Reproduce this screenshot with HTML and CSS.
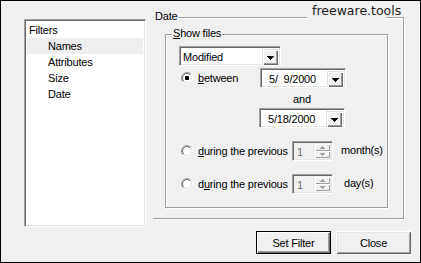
FILE: index.html
```html
<!DOCTYPE html>
<html>
<head>
<meta charset="utf-8">
<link rel="stylesheet" href="styles.css">
</head>
<body>
<div class="window">
  <div class="watermark">freeware.tools</div>
  <div class="main">
    <ul class="listbox sunken">
      <li class="root">Filters</li>
      <li class="child selected">Names</li>
      <li class="child">Attributes</li>
      <li class="child">Size</li>
      <li class="child">Date</li>
    </ul>
    <div class="group date-group">
      <div class="legend date-legend">Date</div>
      <div class="group show-group">
        <div class="legend show-legend"><u>S</u>how files</div>
        <div class="combo sunken">
          <span class="field-text">Modified</span>
          <span class="dropbtn"><svg width="7" height="4" viewBox="0 0 7 4"><path d="M0 0h7v1h-1v1h-1v1h-1v1h-1v-1h-1v-1h-1v-1h-1z" fill="#000"/></svg></span>
        </div>
        <div class="opt-row first-row">
          <svg class="radio" width="12" height="12" viewBox="0 0 12 12"><circle cx="6" cy="6" r="5" fill="#fff"/><path d="M2.1 9.9A5.5 5.5 0 0 1 9.9 2.1" stroke="#a0a0a0" fill="none"/><path d="M2.8 9.2A4.5 4.5 0 0 1 9.2 2.8" stroke="#696969" fill="none"/><path d="M9.9 2.1A5.5 5.5 0 0 1 2.1 9.9" stroke="#fff" fill="none"/><path d="M9.2 2.8A4.5 4.5 0 0 1 2.8 9.2" stroke="#e3e3e3" fill="none"/><rect x="4" y="4" width="4" height="4" rx="1" fill="#000"/></svg>
          <span class="opt-label between-label"><u>b</u>etween</span>
          <div class="datepick sunken">
            <span class="field-text date-text">5/&nbsp;&nbsp;9/2000</span>
            <span class="dropbtn"><svg width="7" height="4" viewBox="0 0 7 4"><path d="M0 0h7v1h-1v1h-1v1h-1v1h-1v-1h-1v-1h-1v-1h-1z" fill="#000"/></svg></span>
          </div>
        </div>
        <div class="and">and</div>
        <div class="datepick sunken second-date">
          <span class="field-text date-text">5/18/2000</span>
          <span class="dropbtn"><svg width="7" height="4" viewBox="0 0 7 4"><path d="M0 0h7v1h-1v1h-1v1h-1v1h-1v-1h-1v-1h-1v-1h-1z" fill="#000"/></svg></span>
        </div>
        <div class="opt-row period-row">
          <svg class="radio" width="12" height="12" viewBox="0 0 12 12"><circle cx="6" cy="6" r="5" fill="#fff"/><path d="M2.1 9.9A5.5 5.5 0 0 1 9.9 2.1" stroke="#a0a0a0" fill="none"/><path d="M2.8 9.2A4.5 4.5 0 0 1 9.2 2.8" stroke="#696969" fill="none"/><path d="M9.9 2.1A5.5 5.5 0 0 1 2.1 9.9" stroke="#fff" fill="none"/><path d="M9.2 2.8A4.5 4.5 0 0 1 2.8 9.2" stroke="#e3e3e3" fill="none"/></svg>
          <span class="opt-label period-label"><u>d</u>uring the previous</span>
          <div class="spin sunken">
            <span class="spin-text">1</span>
            <span class="spin-btns">
              <span class="spin-btn"><svg width="5" height="3" viewBox="0 0 5 3"><path d="M2 0h1v1h1v1h1v1h-5v-1h1v-1h1z" fill="#a0a0a0"/></svg></span>
              <span class="spin-btn"><svg width="5" height="3" viewBox="0 0 5 3"><path d="M0 0h5v1h-1v1h-1v1h-1v-1h-1v-1h-1z" fill="#a0a0a0"/></svg></span>
            </span>
          </div>
          <span class="unit">month(s)</span>
        </div>
        <div class="opt-row period-row">
          <svg class="radio" width="12" height="12" viewBox="0 0 12 12"><circle cx="6" cy="6" r="5" fill="#fff"/><path d="M2.1 9.9A5.5 5.5 0 0 1 9.9 2.1" stroke="#a0a0a0" fill="none"/><path d="M2.8 9.2A4.5 4.5 0 0 1 9.2 2.8" stroke="#696969" fill="none"/><path d="M9.9 2.1A5.5 5.5 0 0 1 2.1 9.9" stroke="#fff" fill="none"/><path d="M9.2 2.8A4.5 4.5 0 0 1 2.8 9.2" stroke="#e3e3e3" fill="none"/></svg>
          <span class="opt-label period-label">d<u>u</u>ring the previous</span>
          <div class="spin sunken">
            <span class="spin-text">1</span>
            <span class="spin-btns">
              <span class="spin-btn"><svg width="5" height="3" viewBox="0 0 5 3"><path d="M2 0h1v1h1v1h1v1h-5v-1h1v-1h1z" fill="#a0a0a0"/></svg></span>
              <span class="spin-btn"><svg width="5" height="3" viewBox="0 0 5 3"><path d="M0 0h5v1h-1v1h-1v1h-1v-1h-1v-1h-1z" fill="#a0a0a0"/></svg></span>
            </span>
          </div>
          <span class="unit day-unit">day(s)</span>
        </div>
      </div>
    </div>
  </div>
  <div class="buttons">
    <button class="btn btn-default">Set Filter</button>
    <button class="btn">Close</button>
  </div>
</div>
</body>
</html>
```
FILE: styles.css
```css
body {
  margin: 0;
  font-family: "Liberation Sans", Arial, sans-serif;
  font-size: 11px;
  letter-spacing: -0.2px;
  color: #000;
  background: #fff;
}

.window {
  position: relative;
  width: 421px;
  height: 263px;
  box-sizing: border-box;
  border: 1px solid #000;
  background: #f0f0f0;
  display: flex;
  flex-direction: column;
}

.watermark {
  position: absolute;
  left: 306px;
  top: 2px;
  width: 74px;
  height: 16px;
  padding-left: 5px;
  background: #f0f0f0;
  white-space: nowrap;
  font-family: "DejaVu Sans", sans-serif;
  font-size: 12.5px;
  letter-spacing: 0;
  line-height: 16px;
  color: #1c1c1c;
  z-index: 2;
}

.sunken {
  box-sizing: border-box;
  border: 1px solid;
  border-color: #a0a0a0 #fff #fff #a0a0a0;
  box-shadow: inset 1px 1px 0 #696969, inset -1px -1px 0 #e3e3e3;
}

.main {
  display: flex;
  align-items: flex-start;
  padding: 18px 0 0 23px;
}

.listbox {
  width: 122px;
  height: 208px;
  margin: 0;
  padding: 2px;
  list-style: none;
  background: #fff;
}

.listbox li {
  height: 16px;
  line-height: 16px;
  white-space: nowrap;
}

.listbox .root {
  padding-left: 2px;
}

.listbox .child {
  padding-left: 21px;
}

.listbox .selected {
  background: #efefef;
}

.group {
  box-sizing: border-box;
  display: flex;
  flex-direction: column;
  align-items: flex-start;
}

.legend {
  height: 13px;
  line-height: 13px;
  margin-top: -8px;
  padding: 0 1px;
  background: #f0f0f0;
  white-space: nowrap;
}

.date-group {
  margin-left: 7px;
  margin-top: -2px;
  width: 251px;
  height: 202px;
  border-top: 1px solid #a0a0a0;
  border-right: 1px solid #a0a0a0;
  border-bottom: 1px solid #a0a0a0;
  box-shadow: inset 0 1px 0 #fff, 1px 1px 0 #fff;
}

.date-legend {
  margin-left: 1px;
}

.show-group {
  margin-top: 11px;
  margin-left: 12px;
  width: 223px;
  height: 174px;
  border: 1px solid #a0a0a0;
  box-shadow: inset 1px 1px 0 #fff, 1px 1px 0 #fff;
}

.show-legend {
  margin-left: 6px;
}

.combo {
  margin-top: 6px;
  margin-left: 13px;
  width: 102px;
  height: 20px;
  background: #fff;
  display: flex;
  align-items: stretch;
  padding: 2px;
}

.field-text {
  flex: 1;
  line-height: 16px;
  padding-left: 1px;
  white-space: nowrap;
}

.dropbtn {
  width: 16px;
  height: 16px;
  box-sizing: border-box;
  background: #f0f0f0;
  box-shadow: inset 1px 1px 0 #e3e3e3, inset 2px 2px 0 #fff, inset -1px -1px 0 #696969, inset -2px -2px 0 #a0a0a0;
  display: flex;
  align-items: center;
  justify-content: center;
  padding-top: 1px;
}

.dropbtn svg {
  display: block;
}

.opt-row {
  display: flex;
  align-items: center;
  height: 20px;
  margin-left: 15px;
}

.first-row {
  margin-top: 2px;
}

.radio {
  display: block;
  flex: none;
  margin-right: 5px;
}

.opt-label {
  white-space: nowrap;
}

.between-label {
  width: 62px;
}

.period-label {
  width: 94px;
}

.datepick {
  width: 86px;
  height: 20px;
  background: #fff;
  display: flex;
  align-items: stretch;
  padding: 2px;
}

.date-text {
  padding-left: 6px;
}

.and {
  margin-left: 93px;
  width: 86px;
  height: 20px;
  line-height: 22px;
  text-align: center;
}

.second-date {
  margin-left: 93px;
}

.period-row {
  margin-top: 13px;
}

.spin {
  width: 41px;
  height: 20px;
  background: #f0f0f0;
  display: flex;
  align-items: stretch;
  padding: 2px;
}

.spin-text {
  flex: 1;
  line-height: 16px;
  padding-left: 2px;
  color: #6d6d6d;
}

.spin-btns {
  width: 15px;
  display: flex;
  flex-direction: column;
}

.spin-btn {
  flex: 1;
  box-sizing: border-box;
  background: #f0f0f0;
  box-shadow: inset 1px 1px 0 #fff, inset -1px -1px 0 #a0a0a0;
  display: flex;
  align-items: center;
  justify-content: center;
}

.spin-btn svg {
  display: block;
}

.unit {
  margin-left: 8px;
  white-space: nowrap;
  align-self: flex-start;
  line-height: 18px;
}

.day-unit {
  margin-left: 11px;
}

.buttons {
  display: flex;
  justify-content: flex-end;
  gap: 5px;
  padding-right: 9px;
  margin-top: 4px;
}

.btn {
  width: 75px;
  height: 23px;
  box-sizing: border-box;
  margin: 0;
  padding: 0;
  border: 0;
  background: #f0f0f0;
  font-family: "Liberation Sans", Arial, sans-serif;
  font-size: 11px;
  letter-spacing: -0.2px;
  color: #000;
  box-shadow: inset 1px 1px 0 #fff, inset -1px -1px 0 #696969, inset 2px 2px 0 #e3e3e3, inset -2px -2px 0 #a0a0a0;
}

.btn-default {
  border: 1px solid #000;
  box-shadow: inset 1px 1px 0 #fff, inset -1px -1px 0 #696969, inset -2px -2px 0 #a0a0a0;
}
```
